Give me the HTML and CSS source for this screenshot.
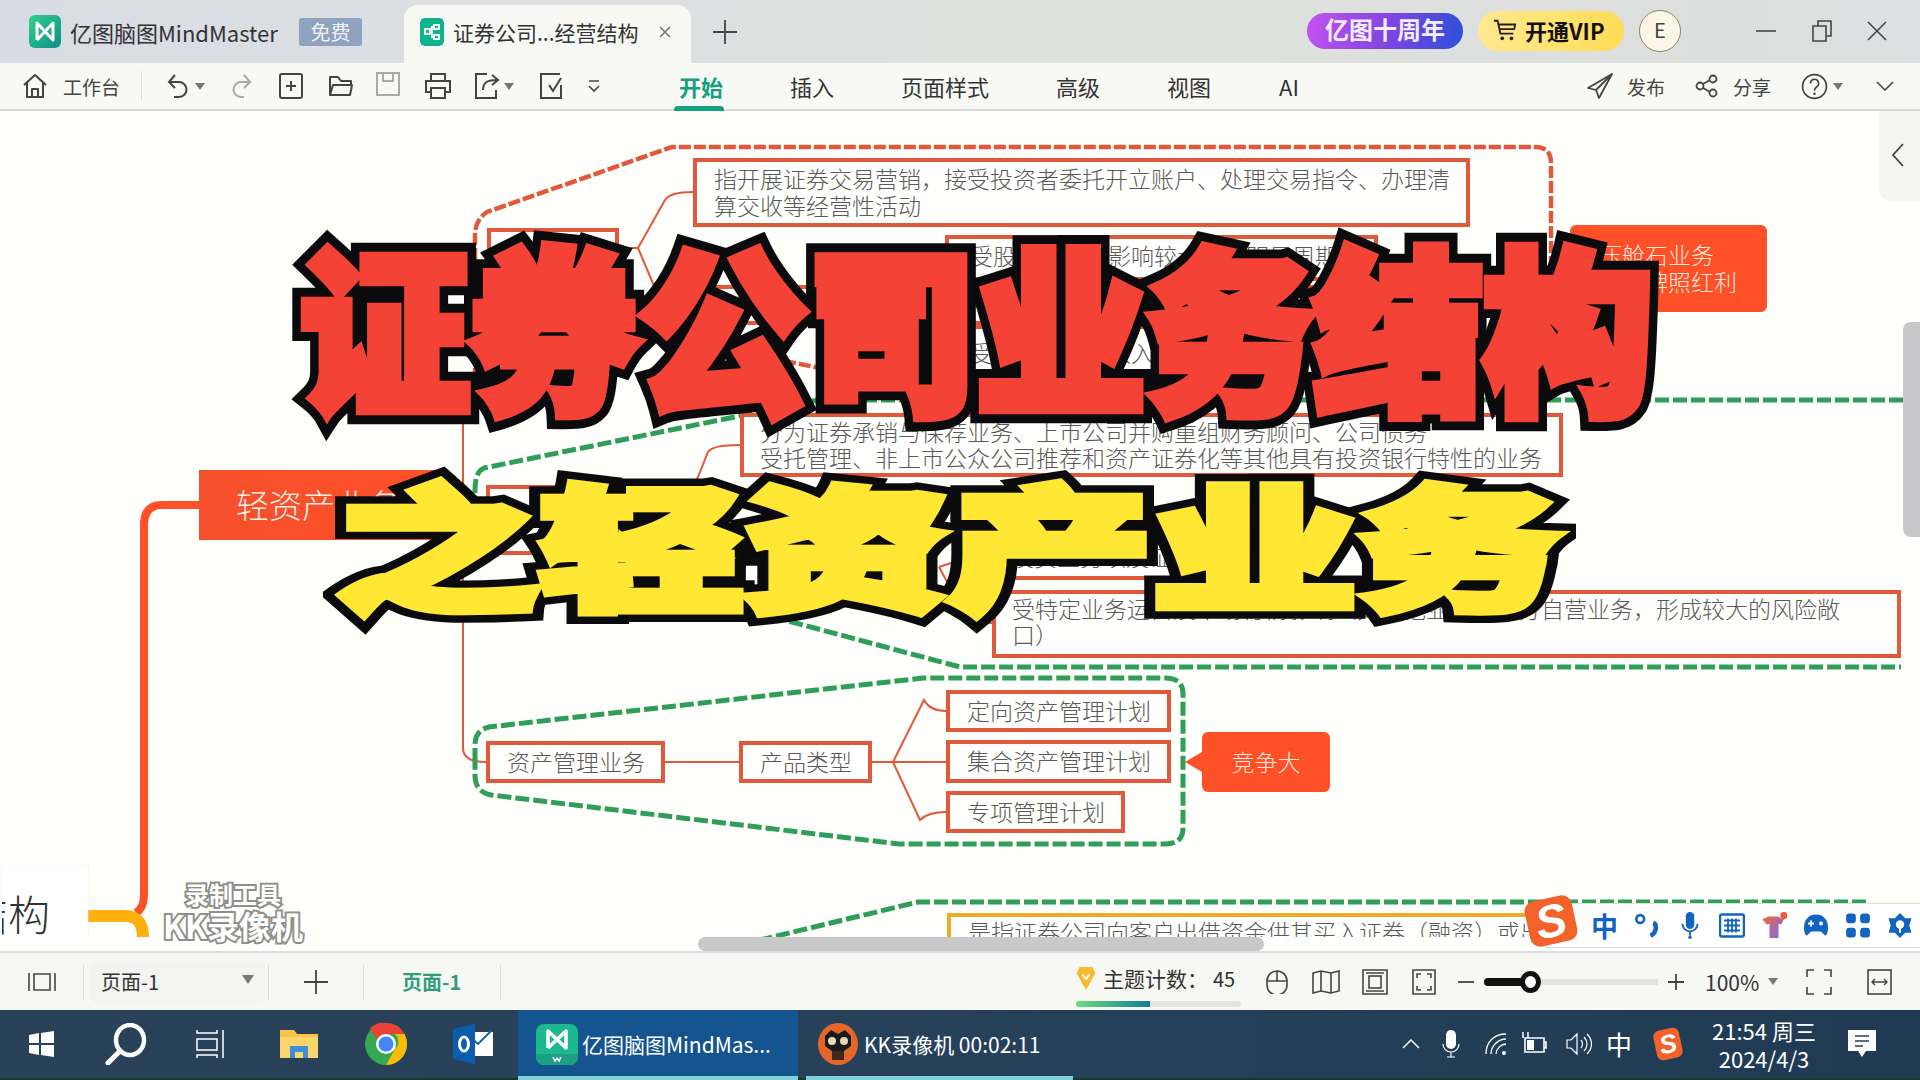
FILE: index.html
```html
<!DOCTYPE html>
<html lang="zh-CN">
<head>
<meta charset="utf-8">
<title>亿图脑图MindMaster</title>
<link rel="stylesheet" href="styles.css">
</head>
<body>
<div class="app">
  <header class="titlebar">
    <svg class="logo" viewBox="0 0 32 33"><defs><linearGradient id="lg" x1="0" y1="0" x2="1" y2="1"><stop offset="0" stop-color="#2fd08a"/><stop offset="1" stop-color="#0d8f86"/></linearGradient></defs><rect width="32" height="33" rx="6" fill="url(#lg)"/><path d="M8 25V8l16 17V8L8 25" fill="none" stroke="#fff" stroke-width="3" stroke-linejoin="round"/></svg>
    <span class="appname">亿图脑图MindMaster</span>
    <span class="free">免费</span>
    <div class="doctab">
      <svg class="docicon" viewBox="0 0 24 28"><rect width="24" height="28" rx="5" fill="#10b48c"/><g fill="none" stroke="#fff" stroke-width="1.8"><rect x="5" y="11" width="5" height="5"/><rect x="14" y="7" width="5" height="4"/><rect x="14" y="17" width="5" height="4"/><path d="M10 13h2v-4h2M12 13v6h2"/></g></svg>
      <span class="doctitle">证券公司...经营结构</span>
      <svg class="docclose" viewBox="0 0 12 12"><path d="M1 1l10 10M11 1L1 11" stroke="#777" stroke-width="1.6"/></svg>
    </div>
    <svg class="newtab" viewBox="0 0 24 24"><path d="M12 0v24M0 12h24" stroke="#444" stroke-width="1.8"/></svg>
    <div class="title-right">
      <span class="anniv">亿图十周年</span>
      <span class="vip"><svg class="cart" viewBox="0 0 26 24"><path d="M1 2h4l3 14h14M6 6h18l-1 5H7" fill="none" stroke="#222" stroke-width="2"/><circle cx="10" cy="21" r="2" fill="#222"/><circle cx="20" cy="21" r="2" fill="#222"/></svg>开通VIP</span>
      <span class="avatar">E</span>
      <svg class="win win-min" viewBox="0 0 20 20"><path d="M0 10h20" stroke="#444" stroke-width="1.6"/></svg>
      <svg class="win win-max" viewBox="0 0 20 22"><path d="M1 6h13v15H1zM6 6V1h13v15h-5" fill="none" stroke="#444" stroke-width="1.6"/></svg>
      <svg class="win win-close" viewBox="0 0 20 20"><path d="M1 1l18 18M19 1L1 19" stroke="#444" stroke-width="1.6"/></svg>
    </div>
  </header>

  <nav class="toolbar">
    <svg class="i i-home" viewBox="0 0 26 26"><path d="M2 12L13 2l11 10M5 10v14h16V10M10 24v-8h6v8" fill="none" stroke="#444" stroke-width="2" stroke-linejoin="round"/></svg>
    <span class="wb">工作台</span>
    <span class="tb-div"></span>
    <svg class="i i-undo" viewBox="0 0 24 26"><path d="M9 2L3 9l6 6M3 9h10a7 7 0 0 1 0 15H8" fill="none" stroke="#444" stroke-width="2"/></svg>
    <span class="caret"></span>
    <svg class="i i-redo" viewBox="0 0 20 26"><path d="M12 2l6 7-6 6M18 9H9a6.500 6.500 0 0 0 0 15h3" fill="none" stroke="#aaa" stroke-width="2"/></svg>
    <svg class="i i-add" viewBox="0 0 24 26"><rect x="1" y="1" width="22" height="24" rx="2" fill="none" stroke="#444" stroke-width="2"/><path d="M12 8v10M7 13h10" stroke="#444" stroke-width="2"/></svg>
    <svg class="i i-open" viewBox="0 0 26 24"><path d="M2 21V3h8l3 4h10v4M2 21h20l2-10H5z" fill="none" stroke="#444" stroke-width="2" stroke-linejoin="round"/></svg>
    <svg class="i i-save" viewBox="0 0 24 24"><path d="M1 1h22v22H1zM7 1v8h10V1" fill="none" stroke="#aaa" stroke-width="2"/></svg>
    <svg class="i i-print" viewBox="0 0 28 26"><path d="M7 8V1h14v7M7 19H2V8h24v11h-5M7 15h14v10H7z" fill="none" stroke="#444" stroke-width="2"/></svg>
    <svg class="i i-export" viewBox="0 0 24 26"><path d="M12 1H1v24h20v-8M8 17c0-8 5-10 14-10M17 2l6 5-6 5" fill="none" stroke="#444" stroke-width="2"/></svg>
    <span class="caret"></span>
    <svg class="i i-check" viewBox="0 0 25 26"><path d="M20 1H1v24h20V12M9 12l4 6 8-13" fill="none" stroke="#444" stroke-width="2"/></svg>
    <svg class="i i-more" viewBox="0 0 12 14"><path d="M1 2h10M1 7l5 5 5-5" fill="none" stroke="#444" stroke-width="1.6"/></svg>
    <div class="tabs">
      <span class="tab active">开始</span>
      <span class="tab">插入</span>
      <span class="tab">页面样式</span>
      <span class="tab">高级</span>
      <span class="tab">视图</span>
      <span class="tab">AI</span>
    </div>
    <div class="tb-right">
      <svg class="i i-send" viewBox="0 0 26 26"><path d="M25 1L1 15l8 2 3 8zM25 1L9 17" fill="none" stroke="#444" stroke-width="1.8" stroke-linejoin="round"/></svg>
      <span class="rt">发布</span>
      <svg class="i i-share" viewBox="0 0 24 24"><circle cx="5" cy="12" r="3.500" fill="none" stroke="#444" stroke-width="1.8"/><circle cx="18" cy="5" r="3.500" fill="none" stroke="#444" stroke-width="1.8"/><circle cx="18" cy="19" r="3.500" fill="none" stroke="#444" stroke-width="1.8"/><path d="M8 10l7-4M8 14l7 4" stroke="#444" stroke-width="1.8"/></svg>
      <span class="rt">分享</span>
      <svg class="i i-help" viewBox="0 0 26 26"><circle cx="13" cy="13" r="11.500" fill="none" stroke="#444" stroke-width="1.6"/><path d="M9 10a4 4 0 1 1 6 3.500c-1.500 1-2 1.500-2 3.500" fill="none" stroke="#444" stroke-width="1.6"/><circle cx="13" cy="20" r="1.200" fill="#444"/></svg>
      <span class="caret"></span>
      <svg class="i i-chev" viewBox="0 0 18 10"><path d="M1 1l8 8 8-8" fill="none" stroke="#444" stroke-width="1.6"/></svg>
    </div>
  </nav>

  <main class="canvas">
    <div class="stage">
      <svg class="links" viewBox="0 111 1920 826">
        <g fill="none" stroke="#e2583a" stroke-width="2">
          <path d="M463 420V748Q463 762 486 762"/>
          <path d="M619 248H638L665 200Q670 192 693 192M638 248L660 300"/>
          <path d="M675 515L698 477L708 452Q712 445 740 445"/>
          <path d="M665 762H739M872 762H946M893 762L924 700Q930 711 946 711M893 762L920 820Q928 812 946 812"/>
          <path d="M939 567L975 555M939 567L965 615Q970 623 992 623"/>
        </g>
        <path class="thick" d="M199 505H162Q144 505 144 525V895Q144 908 136 913" fill="none" stroke="#ff5028" stroke-width="8"/>
        <path d="M88 916H125Q143 916 143 937" fill="none" stroke="#ffb00f" stroke-width="12"/>
        <g fill="none" stroke="#e2583a" stroke-width="4.500" stroke-dasharray="12 3">
          <path d="M475 380V235Q475 220 487 212L672 147H1535Q1551 147 1551 163V380"/>
          <path d="M475 300L820 368H1400"/>
        </g>
        <g fill="none" stroke="#2f9e58" stroke-width="5" stroke-dasharray="14 4">
          <path d="M1903 400H818L484 468Q475 472 475 490V530L792 622L960 667H1901"/>
          <path d="M475 762V745Q475 730 489 727L923 678H1165Q1183 678 1183 694V828Q1183 844 1165 844H899L491 795Q475 792 475 775Z"/>
          <path d="M1866 902H918L760 940"/>
        </g>
      </svg>

      <div class="node n-a">指开展证券交易营销，接受投资者委托开立账户、处理交易指令、办理清<br>算交收等经营性活动</div>
      <div class="node n-b"></div>
      <div class="node n-c">受股市、情绪影响较大，有明显周期性</div>
      <div class="node n-d">券</div>
      <div class="node n-e">受托管理业务收入受市场行情的波动而波动</div>
      <div class="node n-f">分为证券承销与保荐业务、上市公司并购重组财务顾问、公司债务<br>受托管理、非上市公众公司推荐和资产证券化等其他具有投资银行特性的业务</div>
      <div class="node n-g"></div>
      <div class="node n-h">投资业务以及证券自营</div>
      <div class="node n-i">受特定业务运营及市场行情影响（如其他业务和部分自营业务，形成较大的风险敞<br>口）</div>
      <div class="node n-j">资产管理业务</div>
      <div class="node n-k">产品类型</div>
      <div class="node n-l">定向资产管理计划</div>
      <div class="node n-m">集合资产管理计划</div>
      <div class="node n-n">专项管理计划</div>
      <div class="node n-o">是指证券公司向客户出借资金供其买入证券（融资）或出借证券供其卖出</div>
      <div class="flag f-a">压舱石业务<br>券商牌照红利</div>
      <div class="flag f-b">竞争大</div>
      <div class="branch">轻资产业务</div>
      <div class="root"><span class="root-text">结构</span></div>
      <div class="side-toggle"><svg viewBox="0 0 12 24"><path d="M11 1L1 12l10 11" fill="none" stroke="#444" stroke-width="1.8"/></svg></div>
      <div class="vscroll"></div>
    </div>
    <div class="hstrip"><div class="hscroll"></div></div>
    <div class="mark"><span class="mark-a">录制工具</span><span class="mark-b">KK录像机</span></div>
  </main>

  <footer class="statusbar">
    <svg class="s-panel" viewBox="0 0 28 18"><path d="M1 0v18M27 0v18M6 1h16v16H6z" fill="none" stroke="#444" stroke-width="1.6"/></svg>
    <span class="st-div d1"></span>
    <div class="pagesel"><span>页面-1</span><span class="caret big"></span></div>
    <span class="st-div d2"></span>
    <svg class="s-plus" viewBox="0 0 24 24"><path d="M12 0v24M0 12h24" stroke="#444" stroke-width="1.8"/></svg>
    <span class="st-div d3"></span>
    <span class="curpage">页面-1</span>
    <span class="st-div d4"></span>
    <div class="st-right">
      <div class="count">
        <div class="count-row"><svg class="gem" viewBox="0 0 20 26"><path d="M3 1h14l3 7-10 18L0 8z" fill="#f9b92e"/><path d="M6 9l4 5 4-5" fill="none" stroke="#fff" stroke-width="2"/></svg><span class="count-label">主题计数：</span><span class="count-num">45</span></div>
        <div class="progress"><div class="progress-fill"></div></div>
      </div>
      <svg class="si si-mouse" viewBox="0 0 22 24"><path d="M11 1a10 10 0 0 1 10 10v4a8 8 0 0 1-20 0v-4A10 10 0 0 1 11 1zM1 11h20M11 1v10" fill="none" stroke="#444" stroke-width="1.6"/></svg>
      <svg class="si si-map" viewBox="0 0 28 24"><path d="M1 3l8-2 10 2 8-2v20l-8 2-10-2-8 2zM9 1v20M19 3v20" fill="none" stroke="#444" stroke-width="1.6"/></svg>
      <svg class="si si-fit" viewBox="0 0 26 26"><path d="M1 1h24v24H1z" fill="none" stroke="#444" stroke-width="1.6"/><rect x="7" y="7" width="12" height="12" fill="none" stroke="#444" stroke-width="1.6"/><path d="M4 4h18M4 22h18" stroke="#444" stroke-width="1.6"/></svg>
      <svg class="si si-exp" viewBox="0 0 24 26"><path d="M1 1h22v24H1zM5 9V5h4M19 9V5h-4M5 17v4h4M19 17v4h-4" fill="none" stroke="#444" stroke-width="1.6"/></svg>
      <span class="zm-minus"></span>
      <div class="slider"><span class="slider-fill"></span><span class="slider-knob"></span></div>
      <svg class="si si-zplus" viewBox="0 0 16 16"><path d="M8 0v16M0 8h16" stroke="#444" stroke-width="1.8"/></svg>
      <span class="zoomval">100%</span><span class="caret"></span>
      <svg class="si si-full" viewBox="0 0 26 26"><path d="M1 8V1h7M18 1h7v7M25 18v7h-7M8 25H1v-7" fill="none" stroke="#444" stroke-width="1.6"/></svg>
      <svg class="si si-width" viewBox="0 0 25 26"><rect x="1" y="1" width="23" height="24" fill="none" stroke="#444" stroke-width="1.6"/><path d="M5 13h15M8 10l-3 3 3 3M17 10l3 3-3 3" fill="none" stroke="#444" stroke-width="1.4"/></svg>
    </div>
  </footer>

  <div class="taskbar">
    <svg class="tk tk-win" viewBox="0 0 25 26"><path d="M0 4l10-2v10H0zM12 2l13-2v12H12zM0 14h10v10L0 22zM12 14h13v12l-13-2z" fill="#fff"/></svg>
    <svg class="tk tk-search" viewBox="0 0 43 42"><ellipse cx="25" cy="17" rx="14" ry="15" fill="none" stroke="#fff" stroke-width="4.500"/><path d="M15 28L3 40" stroke="#fff" stroke-width="5" stroke-linecap="round"/></svg>
    <svg class="tk tk-view" viewBox="0 0 30 28"><path d="M2 0v3h20V0M2 9h20v11H2zM2 28v-3h20v3M28 0v28" fill="none" stroke="#fff" stroke-width="1.500"/></svg>
    <svg class="tk tk-folder" viewBox="0 0 38 32"><path d="M0 2h14l3 4h21v24H0z" fill="#f8c34a"/><path d="M0 9h38v21H0z" fill="#fbd66c"/><path d="M10 30V18h18v12h-5v-6h-8v6z" fill="#3f8ed8"/></svg>
    <svg class="tk tk-chrome" viewBox="0 0 42 44"><circle cx="21" cy="22" r="21" fill="#34a853"/><path d="M21 1a21 21 0 0 1 18.500 11H21a10 10 0 0 0-9 6L5 6A21 21 0 0 1 21 1z" fill="#ea4335"/><path d="M39.500 12A21 21 0 0 1 21 43l9-16a10 10 0 0 0 0-15z" fill="#fbbc05"/><circle cx="21" cy="22" r="10" fill="#fff"/><circle cx="21" cy="22" r="7.500" fill="#4285f4"/></svg>
    <svg class="tk tk-out" viewBox="0 0 40 40"><path d="M14 8h26v24H14z" fill="#fff"/><path d="M16 12l9 8 13-13" fill="none" stroke="#0d66b3" stroke-width="2"/><path d="M0 5l22-5v40L0 35z" fill="#0b5cad"/><ellipse cx="11" cy="20" rx="4.500" ry="7" fill="none" stroke="#fff" stroke-width="3"/></svg>
    <div class="task task-mm">
      <svg class="task-logo" viewBox="0 0 42 41"><rect width="42" height="41" rx="8" fill="#1cb98e"/><path d="M12 24V7l18 17V7L12 24" fill="none" stroke="#fff" stroke-width="3.500" stroke-linejoin="round"/><path d="M0 30h42v3a8 8 0 0 1-8 8H8a8 8 0 0 1-8-8z" fill="#1c9f86"/><path d="M17 33l2 4 2-3 2 3 2-4" fill="none" stroke="#fff" stroke-width="1.500"/></svg>
      <span>亿图脑图MindMas...</span>
    </div>
    <div class="task task-kk">
      <svg class="task-logo kk" viewBox="0 0 40 42"><ellipse cx="20" cy="21" rx="20" ry="21" fill="#e6662a"/><path d="M7 13l6-6 7 4 7-4 6 6v10l-7 5H14l-7-5z" fill="#1a1a1a"/><circle cx="14" cy="18" r="4" fill="#e8d8b8"/><circle cx="26" cy="18" r="4" fill="#e8d8b8"/><path d="M14 28h12v9H14z" fill="#3a2a20"/></svg>
      <span>KK录像机 00:02:11</span>
    </div>
    <div class="tray">
      <svg class="tr tr-chev" viewBox="0 0 18 10"><path d="M1 9l8-8 8 8" fill="none" stroke="#fff" stroke-width="1.500"/></svg>
      <svg class="tr tr-mic" viewBox="0 0 18 28"><rect x="4" y="0" width="10" height="19" rx="5" fill="#fff"/><path d="M1 14a8 8 0 0 0 16 0M9 22v5M5 27h8" fill="none" stroke="#fff" stroke-width="1.200"/></svg>
      <svg class="tr tr-wifi" viewBox="0 0 24 24"><path d="M2 22C2 10 10 2 22 2M7 22c0-8 7-15 15-15M12 22c0-5 5-10 10-10" fill="none" stroke="#fff" stroke-width="1.300"/><circle cx="20" cy="21" r="2" fill="#fff"/></svg>
      <svg class="tr tr-bat" viewBox="0 0 28 24"><path d="M6 6h19v14H6zM25 10h2v6h-2" fill="none" stroke="#fff" stroke-width="1.600"/><path d="M8 8h7v10H8z" fill="#fff"/><path d="M4 0v6M9 0v6" stroke="#fff" stroke-width="1.500"/></svg>
      <svg class="tr tr-vol" viewBox="0 0 26 24"><path d="M1 8h4l6-6v20l-6-6H1zM15 8c2 2 2 6 0 8M18 5c4 4 4 10 0 14M21 2c6 6 6 14 0 20" fill="none" stroke="#fff" stroke-width="1.200"/></svg>
      <span class="tr-ime">中</span>
      <span class="sogou small">S</span>
      <div class="clock"><span>21:54 周三</span><span>2024/4/3</span></div>
      <svg class="tr tr-note" viewBox="0 0 30 28"><path d="M1 0h28v21H19l-4 6-4-6H1z" fill="#fff"/><path d="M8 6h14M8 11h14M8 16h8" stroke="#2a3f55" stroke-width="1.600"/></svg>
    </div>
  </div>

  <div class="ime">
    <span class="sogou">S</span>
    <span class="ime-cn">中</span>
    <svg class="ii" viewBox="0 0 20 20"><circle cx="4" cy="5" r="3" fill="none" stroke="#1164c0" stroke-width="2"/><path d="M14 8c3 1 3 7-2 10" fill="none" stroke="#1164c0" stroke-width="3.500"/></svg>
    <svg class="ii" viewBox="0 0 20 32"><rect x="5" y="0" width="10" height="20" rx="5" fill="#1164c0"/><path d="M1 14a9 9 0 0 0 18 0M10 24v4" fill="none" stroke="#1164c0" stroke-width="2.200"/><circle cx="10" cy="30" r="2" fill="#1164c0"/></svg>
    <svg class="ii" viewBox="0 0 26 24"><rect x="1" y="1" width="24" height="22" rx="2" fill="none" stroke="#1164c0" stroke-width="2.500"/><path d="M5 7h16M5 12h16M5 17h16M9 5v14M13 5v14M17 5v14" stroke="#1164c0" stroke-width="1.800"/></svg>
    <svg class="ii" viewBox="0 0 28 30"><defs><linearGradient id="sh" x1="0" y1="0" x2="1" y2="1"><stop offset="0" stop-color="#f0683a"/><stop offset="1" stop-color="#7a6cf0"/></linearGradient></defs><path d="M1 8l7-3h10l7 3-3 6-3-1v16H9V13l-3 1z" fill="url(#sh)"/><circle cx="25" cy="4" r="4" fill="#f0583a"/></svg>
    <svg class="ii" viewBox="0 0 26 26"><path d="M13 2C5 2 1 8 1 15c0 4 1 8 3 8l4-4h10l4 4c2 0 3-4 3-8 0-7-4-13-12-13z" fill="#1164c0"/><circle cx="18" cy="11" r="2" fill="#fff"/><path d="M5 11h6M8 8v6" stroke="#fff" stroke-width="2"/></svg>
    <svg class="ii" viewBox="0 0 24 24"><rect x="1" y="1" width="9" height="9" rx="3" fill="#1164c0"/><rect x="14" y="1" width="9" height="9" rx="3" fill="#1164c0"/><rect x="1" y="14" width="9" height="9" rx="3" fill="#1164c0"/><rect x="14" y="14" width="9" height="9" rx="3" fill="#1164c0"/></svg>
    <svg class="ii" viewBox="0 0 24 26"><path d="M12 1l5 5h6l-2 7 2 7h-6l-5 5-5-5H1l2-7-2-7h6z" fill="#1164c0"/><circle cx="12" cy="12" r="4" fill="#fff"/><path d="M12 14v6" stroke="#fff" stroke-width="2"/></svg>
  </div>

  <div class="hero">
    <div class="hero-line red" data-t="证券公司业务结构">证券公司业务结构</div>
    <div class="hero-line yellow" data-t="之轻资产业务">之轻资产业务</div>
  </div>
</div>
</body>
</html>
```
FILE: styles.css
```css
* { box-sizing: border-box; }
html, body { margin: 0; height: 100%; overflow: hidden; }
body { font-family: "Noto Sans CJK SC", "Noto Sans", sans-serif; color: #333; }
svg { display: block; flex: none; }
.app { position: relative; width: 1920px; height: 1080px; display: flex; flex-direction: column; overflow: hidden; }

/* title bar */
.titlebar { height: 63px; flex: none; display: flex; align-items: center; padding-left: 29px; background: linear-gradient(90deg, #d9dce4, #dfe1de 55%, #dcdedf); position: relative; }
.logo { width: 32px; height: 33px; }
.appname { width: 208px; margin-left: 9px; font-size: 22px; white-space: nowrap; color: #333; }
.free { width: 63px; height: 28px; margin-left: 21px; background: #8fa3bf; color: #eef1f6; border-radius: 3px; font-size: 20px; line-height: 28px; text-align: center; }
.doctab { width: 287px; height: 58px; margin-left: 42px; align-self: flex-end; background: #f7f8f3; border-radius: 14px 14px 0 0; display: flex; align-items: center; padding-left: 16px; padding-bottom: 5px; }
.docicon { width: 24px; height: 28px; }
.doctitle { width: 186px; margin-left: 9px; font-size: 21px; white-space: nowrap; }
.docclose { width: 12px; height: 12px; margin-left: 20px; }
.newtab { width: 24px; height: 24px; margin-left: 22px; }
.title-right { margin-left: auto; display: flex; align-items: center; padding-right: 33px; padding-bottom: 2px; }
.anniv { width: 156px; height: 36px; border-radius: 18px; background: linear-gradient(100deg, #c452f0, #7a45e0 55%, #2c4fd8); color: #f4ecff; font-weight: 700; font-size: 24px; line-height: 31px; text-align: center; white-space: nowrap; }
.vip { width: 146px; height: 40px; margin-left: 15px; padding-bottom: 2px; border-radius: 20px; background: linear-gradient(90deg, #ffe98f, #ffdc55); display: flex; align-items: center; padding-left: 15px; font-size: 22px; font-weight: 700; color: #111; white-space: nowrap; }
.cart { width: 24px; height: 24px; margin-right: 8px; }
.avatar { width: 42px; height: 42px; margin-left: 15px; border-radius: 50%; background: #fbf6e6; border: 1.500px solid #8d8468; text-align: center; line-height: 38px; font-size: 20px; color: #444; }
.win-min { width: 20px; height: 20px; margin-left: 75px; }
.win-max { width: 20px; height: 22px; margin-left: 36px; }
.win-close { width: 20px; height: 20px; margin-left: 35px; }

/* toolbar */
.toolbar { height: 48px; flex: none; display: flex; align-items: center; padding-left: 22px; background: #f8f9f4; border-bottom: 2px solid #d9dad6; font-size: 19px; }
.i-home { width: 26px; height: 26px; }
.wb { width: 57px; margin-left: 15px; white-space: nowrap; color: #444; }
.tb-div { width: 1px; height: 30px; margin-left: 21px; background: #ddd; }
.i-undo { width: 24px; height: 26px; margin-left: 24px; }
.caret { flex: none; width: 0; height: 0; margin-left: 5px; border: 5px solid transparent; border-top: 7px solid #777; border-bottom: 0; }
.i-redo { width: 20px; height: 26px; margin-left: 27px; }
.i-add { width: 24px; height: 26px; margin-left: 27px; }
.i-open { width: 26px; height: 24px; margin-left: 25px; }
.i-save { width: 24px; height: 24px; margin-left: 22px; margin-top: -5px; }
.i-print { width: 28px; height: 26px; margin-left: 24px; }
.i-export { width: 24px; height: 26px; margin-left: 23px; }
.i-check { width: 25px; height: 26px; margin-left: 26px; }
.i-more { width: 12px; height: 14px; margin-left: 23px; }
.tabs { margin-left: 79px; display: flex; gap: 67px; height: 100%; }
.tab { position: relative; font-size: 22px; line-height: 46px; white-space: nowrap; color: #333; }
.tab:last-child { margin-left: 1px; }
.tab.active { color: #12a07f; font-weight: 700; }
.tab.active::after { content: ""; position: absolute; left: -5px; right: -1px; bottom: -2px; height: 5px; background: #12a07f; border-radius: 4px 4px 0 0; }
.tb-right { margin-left: auto; display: flex; align-items: center; padding-right: 26px; }
.rt { margin-left: 14px; color: #444; white-space: nowrap; }
.i-send { width: 26px; height: 26px; }
.i-share { width: 24px; height: 24px; margin-left: 30px; }
.i-help { width: 27px; height: 27px; margin-left: 30px; }
.i-chev { width: 18px; height: 10px; margin-left: 33px; }

/* canvas */
.canvas { position: relative; height: 842px; flex: none; background: #fffffb; display: flex; flex-direction: column; }
.stage { position: relative; height: 826px; flex: none; overflow: hidden; }
.links { position: absolute; left: 0; top: 0; width: 1920px; height: 826px; }
.hstrip { height: 16px; flex: none; position: relative; background: #fffffd; border-bottom: 2px solid #dcdce4; }
.hscroll { position: absolute; left: 698px; right: 656px; top: 0; height: 14px; background: #c9c9cc; border-radius: 8px; }
.vscroll { position: absolute; right: 0; top: 211px; width: 17px; height: 215px; background: #c8c8ca; border-radius: 8px 0 0 8px; }
.side-toggle { position: absolute; right: 0; top: 0; width: 41px; height: 90px; background: #f4f4f1; border-radius: 0 0 0 12px; display: flex; align-items: center; padding-left: 13px; padding-bottom: 2px; }
.side-toggle svg { width: 12px; height: 24px; }

.node { position: absolute; background: #fffffd; border: 4px solid #e2583a; font-size: 23px; line-height: 27px; color: #595959; font-weight: 300; white-space: nowrap; padding: 3px 17px; }
.n-a { left: 693px; top: 47px; width: 777px; height: 69px; }
.n-b { left: 487px; top: 117px; width: 132px; height: 60px; }
.n-c { left: 945px; top: 124px; width: 433px; height: 46px; padding: 3px 21px; }
.n-d { left: 700px; top: 174px; width: 700px; height: 40px; }
.n-e { left: 945px; top: 214px; width: 455px; height: 53px; padding: 10px 21px; }
.n-f { left: 740px; top: 302px; width: 823px; height: 64px; padding: 1px 16px; line-height: 26px; }
.n-g { left: 486px; top: 374px; width: 132px; height: 70px; }
.n-h { left: 990px; top: 425px; width: 380px; height: 44px; }
.n-i { left: 992px; top: 479px; width: 909px; height: 68px; padding: 1px 16px; line-height: 26px; }
.n-j { left: 486px; top: 630px; width: 179px; height: 42px; line-height: 32px; padding: 0 17px; }
.n-k { left: 739px; top: 630px; width: 133px; height: 42px; line-height: 32px; padding: 0 17px; }
.n-l { left: 946px; top: 579px; width: 225px; height: 42px; line-height: 32px; padding: 0 17px; }
.n-m { left: 946px; top: 629px; width: 225px; height: 43px; line-height: 32px; padding: 0 17px; }
.n-n { left: 946px; top: 680px; width: 179px; height: 42px; line-height: 32px; padding: 0 17px; }
.n-o { left: 947px; top: 802px; width: 960px; height: 60px; border-color: #f0a828; line-height: 29px; padding: 0 17px; }

.flag { position: absolute; background: #ff5028; color: #ffe9df; font-weight: 300; border-radius: 6px; font-size: 23px; line-height: 27px; white-space: nowrap; }
.f-a { left: 1570px; top: 114px; width: 197px; height: 87px; padding: 16px 0 0 29px; text-align: left; }
.f-b { left: 1202px; top: 621px; width: 128px; height: 60px; line-height: 58px; text-align: center; }
.f-b::before { content: ""; position: absolute; left: -17px; top: 20px; border: 10px solid transparent; border-left: 0; border-right: 17px solid #ff5028; }
.branch { position: absolute; left: 199px; top: 359px; width: 245px; height: 70px; background: linear-gradient(90deg, #f4502c, #ff5028); color: #ffeee6; font-size: 33px; line-height: 68px; padding-left: 37px; font-weight: 300; white-space: nowrap; }
.root { position: absolute; left: 2px; top: 755px; width: 86px; height: 71px; background: #fff; overflow: hidden; box-shadow: 0 0 2px #e5e5e5; }
.root-text { position: absolute; right: 38px; top: 19px; font-size: 42px; line-height: 56px; color: #333; white-space: nowrap; font-weight: 300; }
.mark { position: absolute; left: 163px; top: 769px; width: 140px; height: 64px; display: flex; flex-direction: column; align-items: center; color: #fff; font-weight: 700; -webkit-text-stroke: 4px #8f8f8c; paint-order: stroke fill; white-space: nowrap; }
.mark-a { font-size: 24px; line-height: 28px; }
.mark-b { font-size: 32px; line-height: 34px; }

/* status bar */
.statusbar { height: 57px; flex: none; display: flex; align-items: center; background: #f7f8f3; padding-left: 28px; font-size: 20px; }
.s-panel { width: 28px; height: 18px; }
.st-div { width: 1px; height: 36px; background: #ddd; flex: none; }
.d1 { margin-left: 27px; }
.pagesel { width: 175px; height: 42px; margin-left: 6px; margin-right: 3px; background: #f3f4f2; border-radius: 8px; display: flex; align-items: center; justify-content: space-between; padding: 0 11px 0 11px; color: #333; }
.pagesel .big { border-width: 6px; border-top-width: 9px; border-bottom-width: 0; margin-top: -4px; }
.s-plus { width: 24px; height: 24px; margin-left: 35px; }
.d3 { margin-left: 35px; }
.curpage { width: 63px; margin-left: 38px; color: #2f9e78; font-weight: 700; white-space: nowrap; }
.d4 { margin-left: 35px; }
.st-right { margin-left: auto; display: flex; align-items: center; padding-right: 28px; }
.count { width: 165px; height: 45px; display: flex; flex-direction: column; justify-content: space-between; margin-top: 6px; }
.count-row { display: flex; align-items: center; height: 32px; }
.gem { width: 20px; height: 24px; }
.count-label { margin-left: 7px; width: 110px; font-size: 21px; white-space: nowrap; }
.count-num { white-space: nowrap; margin-left: 0; }
.progress { height: 6px; background: #e4e4e4; border-radius: 3px; overflow: hidden; }
.progress-fill { width: 74px; height: 100%; background: linear-gradient(90deg, #6fdc7f, #0f7f94); }
.si-mouse { width: 22px; height: 24px; margin-left: 25px; }
.si-map { width: 28px; height: 24px; margin-left: 24px; }
.si-fit { width: 26px; height: 26px; margin-left: 22px; }
.si-exp { width: 24px; height: 26px; margin-left: 24px; }
.zm-minus { width: 16px; height: 2px; margin-left: 22px; background: #555; flex: none; }
.slider { position: relative; width: 174px; height: 6px; margin-left: 10px; background: #e2e2e2; flex: none; }
.slider-fill { position: absolute; left: 0; top: -1px; width: 42px; height: 8px; background: #111; border-radius: 4px; }
.slider-knob { position: absolute; left: 36px; top: -8px; width: 21px; height: 22px; background: #fff; border: 5px solid #111; border-radius: 50%; }
.si-zplus { width: 16px; height: 16px; margin-left: 10px; }
.zoomval { margin-left: 21px; width: 58px; font-size: 21px; white-space: nowrap; color: #333; }
.si-full { width: 26px; height: 26px; margin-left: 28px; }
.si-width { width: 25px; height: 26px; margin-left: 35px; }

/* task bar */
.taskbar { height: 70px; flex: none; display: flex; align-items: center; padding-left: 29px; background: linear-gradient(90deg, #2a4258, #25405a 60%, #1f3a52); color: #fff; border-bottom: 2px solid #123c2e; }
.tk-win { width: 25px; height: 26px; }
.tk-search { width: 43px; height: 42px; margin-left: 51px; }
.tk-view { width: 30px; height: 28px; margin-left: 47px; }
.tk-folder { width: 38px; height: 32px; margin-left: 55px; }
.tk-chrome { width: 42px; height: 44px; margin-left: 47px; }
.tk-out { width: 40px; height: 40px; margin-left: 46px; }
.task { height: 68px; display: flex; align-items: center; position: relative; font-size: 21px; white-space: nowrap; }
.task::after { content: ""; position: absolute; left: 0; right: 0; bottom: -2px; height: 4px; background: #7fd0d8; }
.task-mm { width: 280px; margin-left: 25px; background: #15558f; padding-left: 18px; }
.task-kk { width: 267px; margin-left: 8px; padding-left: 12px; }
.task-logo { width: 42px; height: 41px; margin-right: 4px; }
.kk { width: 40px; height: 42px; margin-right: 6px; }
.tray { margin-left: auto; display: flex; align-items: center; padding-right: 43px; }
.tr-chev { width: 18px; height: 10px; }
.tr-mic { width: 18px; height: 28px; margin-left: 22px; }
.tr-wifi { width: 24px; height: 24px; margin-left: 24px; }
.tr-bat { width: 28px; height: 24px; margin-left: 11px; }
.tr-vol { width: 26px; height: 24px; margin-left: 19px; }
.tr-ime { margin-left: 14px; font-size: 26px; line-height: 30px; }
.sogou { flex: none; width: 48px; height: 46px; background: #f2622a; color: #fff; border-radius: 10px; transform: rotate(-12deg); font: italic 700 46px/46px "Liberation Sans", sans-serif; text-align: center; }
.sogou.small { width: 26px; height: 30px; margin-left: 23px; border-radius: 6px; font-size: 26px; line-height: 30px; }
.clock { width: 112px; margin-left: 27px; display: flex; flex-direction: column; align-items: center; font-size: 22px; line-height: 28px; white-space: nowrap; }
.tr-note { width: 30px; height: 28px; margin-left: 27px; }

/* input method bar */
.ime { position: absolute; left: 1546px; top: 903px; width: 374px; height: 45px; background: #fff; border: 1px solid #ddd; border-right: 0; display: flex; align-items: center; gap: 16px; padding-left: 44px; }
.ime > .sogou { position: absolute; left: -20px; top: -6px; }
.ime-cn { width: 28px; color: #1164c0; font-weight: 700; font-size: 27px; line-height: 36px; }
.ii { width: 26px; height: 27px; }

/* headline overlay */
.hero { position: absolute; inset: 0; pointer-events: none; }
.hero-line { position: absolute; white-space: nowrap; font-weight: 900; line-height: 1; z-index: 0; -webkit-text-stroke-width: 10px; paint-order: stroke fill; }
.hero-line::before { content: attr(data-t); position: absolute; left: 0; top: 0; z-index: -1; color: #0b0b0d; -webkit-text-stroke: 27px #0b0b0d; text-shadow: 0 4px 0 #0b0b0d; }
.red { left: 300px; top: 233px; font-size: 170px; letter-spacing: -1px; color: #f44336; -webkit-text-stroke-color: #f44336; transform: scaleY(1.05); transform-origin: 0 0; }
.yellow { left: 335px; top: 473px; font-size: 156px; color: #ffe733; -webkit-text-stroke-color: #ffe733; transform: scale(1.31, .87); transform-origin: 0 0; }
```
